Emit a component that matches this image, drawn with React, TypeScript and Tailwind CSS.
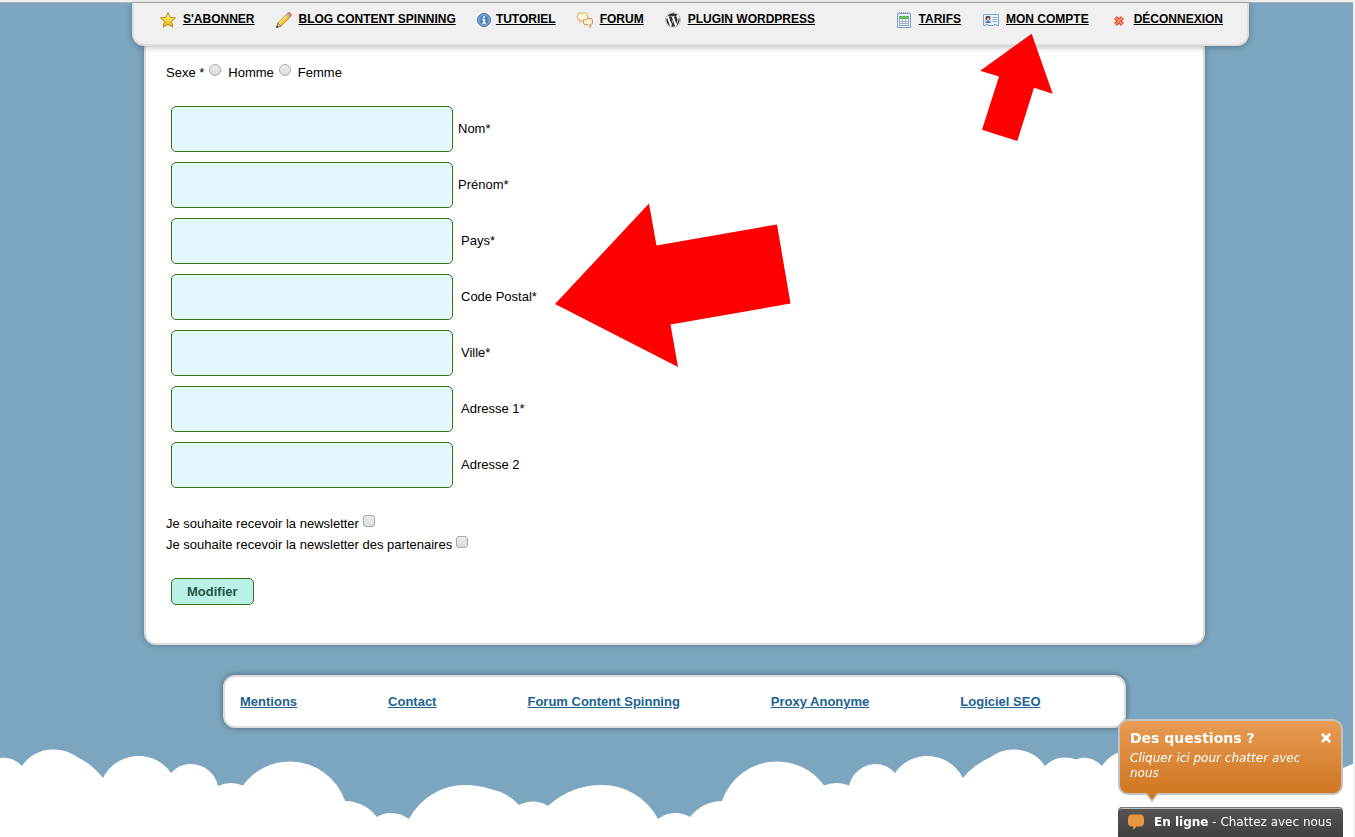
import { useState, type ReactNode } from "react";
import { FaWordpress } from "react-icons/fa";

/**
 * Account page: hanging top menu, profile form, footer links and the
 * live-chat widget, over a sky with a tiled strip of clouds.
 */

type MenuItem = { label: string; icon: ReactNode; iconWidth?: string };

const MENU_LEFT: MenuItem[] = [
  { label: "S'ABONNER", icon: <StarIcon /> },
  { label: "BLOG CONTENT SPINNING", icon: <PencilIcon /> },
  { label: "TUTORIEL", icon: <InfoIcon />, iconWidth: "w-[14px]" },
  { label: "FORUM", icon: <ForumIcon /> },
  {
    label: "PLUGIN WORDPRESS",
    icon: <FaWordpress className="size-4 rounded-full bg-white text-[#333333]" />,
  },
];

const MENU_RIGHT: MenuItem[] = [
  { label: "TARIFS", icon: <CalendarIcon /> },
  { label: "MON COMPTE", icon: <CardIcon /> },
  { label: "DÉCONNEXION", icon: <CrossIcon /> },
];

// "pad" adds the extra space some labels have after the field.
const FIELDS = [
  { id: "nom", label: "Nom*" },
  { id: "prenom", label: "Prénom*" },
  { id: "pays", label: "Pays*", pad: true },
  { id: "cp", label: "Code Postal*", pad: true },
  { id: "ville", label: "Ville*", pad: true },
  { id: "adresse1", label: "Adresse 1*", pad: true },
  { id: "adresse2", label: "Adresse 2", pad: true },
];

const NEWSLETTERS = [
  { id: "news", label: "Je souhaite recevoir la newsletter" },
  { id: "partners", label: "Je souhaite recevoir la newsletter des partenaires" },
];

const FOOTER_LINKS = [
  "Mentions",
  "Contact",
  "Forum Content Spinning",
  "Proxy Anonyme",
  "Logiciel SEO",
];

const TICK =
  "mt-[2px] size-3 shrink-0 appearance-none border border-[#a9a9a9] bg-linear-to-b from-[#ededed] to-[#dcdcdc] checked:bg-[#555555]";

export default function App() {
  const [chatOpen, setChatOpen] = useState(true);

  return (
    <div className="relative flex min-h-screen flex-col overflow-hidden border-r-2 border-[#f1f1f1] bg-[#7ca6c0] font-['Liberation_Sans',Arial,sans-serif] text-[13px] leading-[21px] text-black">
      <div className="h-[3px] border-b border-[#b2b2b6] bg-[#f1f1f1]" />
      <Clouds />

      <div className="relative pr-1">
        <div className="relative mx-auto max-w-[1061px]">
          <header className="relative z-10 -mr-11 -ml-3 flex justify-between rounded-b-xl border-2 border-t-0 border-[#dddddd] bg-[#f0f0f0] pt-2 pr-6 pb-[15px] pl-[26px] shadow-[0_1px_6px_rgba(0,0,0,0.3)]">
            <Menu items={MENU_LEFT} gap="gap-[21px]" />
            <Menu items={MENU_RIGHT} gap="gap-[22px]" />
          </header>

          <main className="rounded-b-xl border-2 border-t-0 border-[#dddddd] bg-white px-5 pt-4 pb-[38px] shadow-[0_0_6px_rgba(0,0,0,0.3)]">
            <form onSubmit={(e) => e.preventDefault()}>
              <div role="radiogroup" aria-labelledby="sexe" className="flex gap-[5px]">
                <span id="sexe">Sexe *</span>
                {["Homme", "Femme"].map((s) => (
                  <label key={s} className="flex gap-[7px]">
                    <input type="radio" name="sexe" className={`${TICK} rounded-full`} />
                    {s}
                  </label>
                ))}
              </div>

              <div className="mt-[23px] flex flex-col gap-[10px] pl-[5px]">
                {FIELDS.map((f) => (
                  <div key={f.id} className="flex items-center gap-[5px]">
                    <input
                      id={f.id}
                      type="text"
                      className="h-[46px] w-[282px] rounded-[5px] border border-[#3d7010] bg-[#e3f7ff] px-3 outline-none"
                    />
                    <label htmlFor={f.id} className={f.pad ? "pb-[2px] pl-[3px]" : "pb-[2px]"}>
                      {f.label}
                    </label>
                  </div>
                ))}
              </div>

              <div className="mt-[25px]">
                {NEWSLETTERS.map((n) => (
                  <div key={n.id} className="flex gap-1">
                    <label htmlFor={n.id}>{n.label}</label>
                    <input id={n.id} type="checkbox" className={`${TICK} rounded-[3px]`} />
                  </div>
                ))}
              </div>

              <button
                type="submit"
                className="mt-[23px] ml-[5px] block h-[27px] rounded-[5px] border border-[#3d7010] bg-[#b9f1e7] px-[15px] font-bold text-[#1f5345]"
              >
                Modifier
              </button>
            </form>
          </main>

          {/* Hand-placed pointers over the menu and the form */}
          <svg
            className="pointer-events-none absolute top-[30px] right-[152px] z-20"
            width="74"
            height="110"
            viewBox="979 33 74 110"
            aria-hidden
          >
            <path
              d="M1031.7 33.7 1052.7 93.8 1034 87.8 1017.3 141 982 129.7 999 76.4 980.2 70.7Z"
              fill="#ff0000"
            />
          </svg>
          <svg
            className="pointer-events-none absolute top-[200px] left-[410px] z-20"
            width="240"
            height="166"
            viewBox="554 203 240 166"
            aria-hidden
          >
            <path
              d="M555 304 649 203.500 656.500 245.500 777 224.500 790.500 303.500 670.500 324.500 678 367Z"
              fill="#ff0000"
            />
          </svg>
        </div>

        <footer className="mx-auto mt-[30px] mb-10 max-w-[903px] rounded-xl border-2 border-[#dddddd] bg-white px-[15px] py-[14px] shadow-[0_0_6px_rgba(0,0,0,0.4)]">
          <nav className="flex gap-[91px] whitespace-nowrap">
            {FOOTER_LINKS.map((l) => (
              <a key={l} href="#" className="font-bold text-[#1d6290] underline">
                {l}
              </a>
            ))}
          </nav>
        </footer>
      </div>

      {/* Chat widget */}
      <aside className="fixed right-3 bottom-0 z-30 w-[225px] font-['DejaVu_Sans',Verdana,sans-serif] text-xs text-white">
        {chatOpen && (
          <div className="relative mb-3 rounded-[10px] border-2 border-[#c2c2c2] bg-linear-to-b from-[#e89c54] to-[#d0761c] bg-origin-border px-[10px] pt-[7px] pb-3">
            <div className="mb-[3px] flex items-center justify-between">
              <h2 className="text-sm leading-5 font-bold">Des questions ?</h2>
              <button type="button" aria-label="Fermer" onClick={() => setChatOpen(false)}>
                <svg width="10" height="10" viewBox="0 0 10 10" aria-hidden>
                  <path d="M1 1 9 9M9 1 1 9" stroke="#ffffff" strokeWidth="2.800" />
                </svg>
              </button>
            </div>
            <p className="pr-6 leading-[15px] italic">Cliquer ici pour chatter avec nous</p>
            <svg
              className="absolute top-full left-[25px]"
              width="14"
              height="10"
              viewBox="0 0 14 10"
              aria-hidden
            >
              <path d="M0 0H14L7 9.500Z" fill="#c2c2c2" />
              <path d="M2 0H12L7 6.800Z" fill="#d0761c" />
            </svg>
          </div>
        )}
        <button
          type="button"
          className="flex h-[30px] w-full items-center gap-[10px] rounded-t-[4px] border-t border-[#777777] bg-linear-to-b from-[#555555] to-[#404040] pb-[2px] pl-[10px] whitespace-nowrap shadow-[inset_0_1px_0_#bdbdbd]"
        >
          <svg width="16" height="16" viewBox="0 0 16 16" aria-hidden>
            <path
              d="M4 0.500H12Q16 0.500 16 4.500V8.500Q16 12.500 12 12.500H8.500L5.200 16 5.200 12.500H4Q0 12.500 0 8.500V4.500Q0 0.500 4 0.500Z"
              fill="#e5963f"
            />
          </svg>
          <span>
            <b>En ligne</b> - Chattez avec nous
          </span>
        </button>
      </aside>
    </div>
  );
}

function Menu({ items, gap }: { items: MenuItem[]; gap: string }) {
  return (
    <nav className={`flex text-xs leading-4 font-bold whitespace-nowrap ${gap}`}>
      {items.map((m) => (
        <a key={m.label} href="#" className="flex gap-[5px] underline">
          <span className={`flex h-[18px] items-center ${m.iconWidth ?? "w-[18px]"}`}>{m.icon}</span>
          {m.label}
        </a>
      ))}
    </nav>
  );
}

// One 1080px wide tile, repeated across the window.
function Clouds() {
  return (
    <svg className="absolute inset-x-0 bottom-0 h-[88px] w-full" aria-hidden>
      <defs>
        <pattern id="clouds" x="22" y="0" width="1080" height="88" patternUnits="userSpaceOnUse">
          <path
            transform="translate(-22 0)"
            d="M22 17A37 37 0 0 1 53 0.500A41 41 0 0 1 78 8.500A70 70 0 0 1 103 29A40 40 0 0 1 139 7A39 39 0 0 1 171 24A27 27 0 0 1 191 15A28 28 0 0 1 218 37A30 30 0 0 1 231 34A30 30 0 0 1 243 36.500A58 58 0 0 1 290 12.500A58 58 0 0 1 345 52A42 42 0 0 1 377 68A26 26 0 0 1 391 64A30 30 0 0 1 409 70A63 63 0 0 1 465 36A83 83 0 0 1 492 40.500A50 50 0 0 1 519 56A30 30 0 0 1 533 52.500A30 30 0 0 1 548 57A80 80 0 0 1 602 36A63 63 0 0 1 658 70A27 27 0 0 1 675 64A30 30 0 0 1 690 68A42 42 0 0 1 722 52A58 58 0 0 1 776 12.500A58 58 0 0 1 824 36.500A30 30 0 0 1 837 34A30 30 0 0 1 849 36.500A28 28 0 0 1 875 15A27 27 0 0 1 895 24A39 39 0 0 1 928 7A40 40 0 0 1 963 29A70 70 0 0 1 990 8.500A41 41 0 0 1 1012 0.500A37 37 0 0 1 1045 17A27 27 0 0 1 1065 8.500A30 30 0 0 1 1076 10.500A30 30 0 0 1 1083 8.500A27 27 0 0 1 1102 17V88H22Z"
            fill="#ffffff"
          />
        </pattern>
      </defs>
      <rect width="100%" height="88" fill="url(#clouds)" />
    </svg>
  );
}

function StarIcon() {
  return (
    <svg width="16" height="16" viewBox="0 0 16 16" aria-hidden>
      <defs>
        <linearGradient id="star" x1="0" y1="0" x2="0" y2="1">
          <stop offset="0" stopColor="#fff3a6" />
          <stop offset="0.500" stopColor="#f6d743" />
          <stop offset="1" stopColor="#e2a90c" />
        </linearGradient>
      </defs>
      <path
        d="M8 0.700 10.200 5.300 15.400 5.900 11.600 9.500 12.700 15 8 12.400 3.300 15 4.400 9.500 0.600 5.900 5.800 5.300Z"
        fill="url(#star)"
        stroke="#b98c12"
        strokeLinejoin="round"
      />
    </svg>
  );
}

function PencilIcon() {
  return (
    <svg width="16" height="16" viewBox="0 0 16 16" aria-hidden>
      <path d="M0.500 15.500 1.800 11 5 14.200Z" fill="#f0d9a8" stroke="#54401c" strokeWidth="0.700" />
      <path d="M0.300 15.700 1 13.400 2.700 15Z" fill="#222222" />
      <path d="M1.800 11 10.600 2.200 13.800 5.400 5 14.200Z" fill="#f7c531" stroke="#b07b10" strokeWidth="0.800" />
      <path d="M3 11.500 11.300 3.200" stroke="#ffec9a" strokeWidth="1.200" />
      <path d="M10.600 2.200 11.800 1 15 4.200 13.800 5.400Z" fill="#b9c4d0" stroke="#7d8894" strokeWidth="0.600" />
      <path d="M11.800 1Q13.200 -0.200 14.700 1.300T15 4.200Z" fill="#ec8878" stroke="#b85848" strokeWidth="0.600" />
    </svg>
  );
}

function InfoIcon() {
  return (
    <svg width="14" height="14" viewBox="0 0 14 14" aria-hidden>
      <rect width="14" height="14" fill="#f8f8f8" />
      <circle cx="7" cy="7" r="6.500" fill="#5585c1" stroke="#3c69a5" />
      <circle cx="7" cy="7" r="5.400" fill="none" stroke="#9dbde2" strokeWidth="0.900" />
      <path d="M6 3.200H8V4.800H6ZM5.300 5.800H8V9.800H9V10.800H5.200V9.800H6.200V6.800H5.300Z" fill="#ffffff" />
    </svg>
  );
}

function ForumIcon() {
  return (
    <svg width="16" height="16" viewBox="0 0 16 16" aria-hidden>
      <path
        d="M8.500 6.500H13.500Q15.500 6.500 15.500 8.500V10.500Q15.500 12.500 13.500 12.700V15.300L11 12.700H8.500Q6.500 12.700 6.500 10.500V8.500Q6.500 6.500 8.500 6.500Z"
        fill="#fff0d0"
        stroke="#d9824e"
      />
      <path
        d="M2.800 1H8.200Q10.500 1 10.500 3.300V5.700Q10.500 8 8.200 8H5.500L3 10.700V8Q0.500 8 0.500 5.700V3.300Q0.500 1 2.800 1Z"
        fill="#fff8dc"
        stroke="#e0a050"
      />
    </svg>
  );
}

function CalendarIcon() {
  return (
    <svg width="16" height="16" viewBox="0 0 16 16" aria-hidden>
      <path d="M1.500 1.500H14.500V15.500H1.500Z" fill="#e3effc" stroke="#7ba3d4" />
      <path d="M3.500 0V2M5.500 0V2M7.500 0V2M9.500 0V2M11.500 0V2" stroke="#8c97a8" />
      <path d="M3 4H13V7H3Z" fill="#5dbb5a" />
      <path d="M3 7H13V14H3Z" fill="#9fb1c4" />
      <path
        d="M4 7h2v2h-2zM7 7h2v2h-2zM10 7h2v2h-2zM4 10h2v1h-2zM7 10h2v1h-2zM10 10h2v1h-2zM4 12h2v1h-2zM7 12h2v1h-2zM10 12h2v1h-2z"
        fill="#ffffff"
      />
    </svg>
  );
}

function CardIcon() {
  return (
    <svg width="16" height="16" viewBox="0 0 16 16" aria-hidden>
      <path
        d="M0.500 2.500H15.500V13.500H13.500V12.500H11.500V13.500H4.500V12.500H2.500V13.500H0.500Z"
        fill="#e5f0fb"
        stroke="#7ba6d6"
      />
      <path d="M2 4H8V11H2Z" fill="#bdd5ee" />
      <circle cx="5" cy="6.300" r="2.300" fill="#2f2a28" />
      <circle cx="5.200" cy="6.900" r="1.500" fill="#f6c48e" />
      <path d="M2.500 11Q2.500 9 5 9T7.600 11Z" fill="#3b6ea9" />
      <path d="M9.500 5.500H14M9.500 7.500H14M9.500 9.500H14" stroke="#8db2dc" />
    </svg>
  );
}

function CrossIcon() {
  return (
    <svg className="mt-[2px] ml-[2px]" width="12" height="12" viewBox="0 0 12 12" aria-hidden>
      <path d="M2.500 2.500 9.500 9.500M9.500 2.500 2.500 9.500" stroke="#d4452c" strokeWidth="4" />
      <path d="M2.500 2.500 9.500 9.500M9.500 2.500 2.500 9.500" stroke="#f78468" strokeWidth="2.400" />
    </svg>
  );
}
